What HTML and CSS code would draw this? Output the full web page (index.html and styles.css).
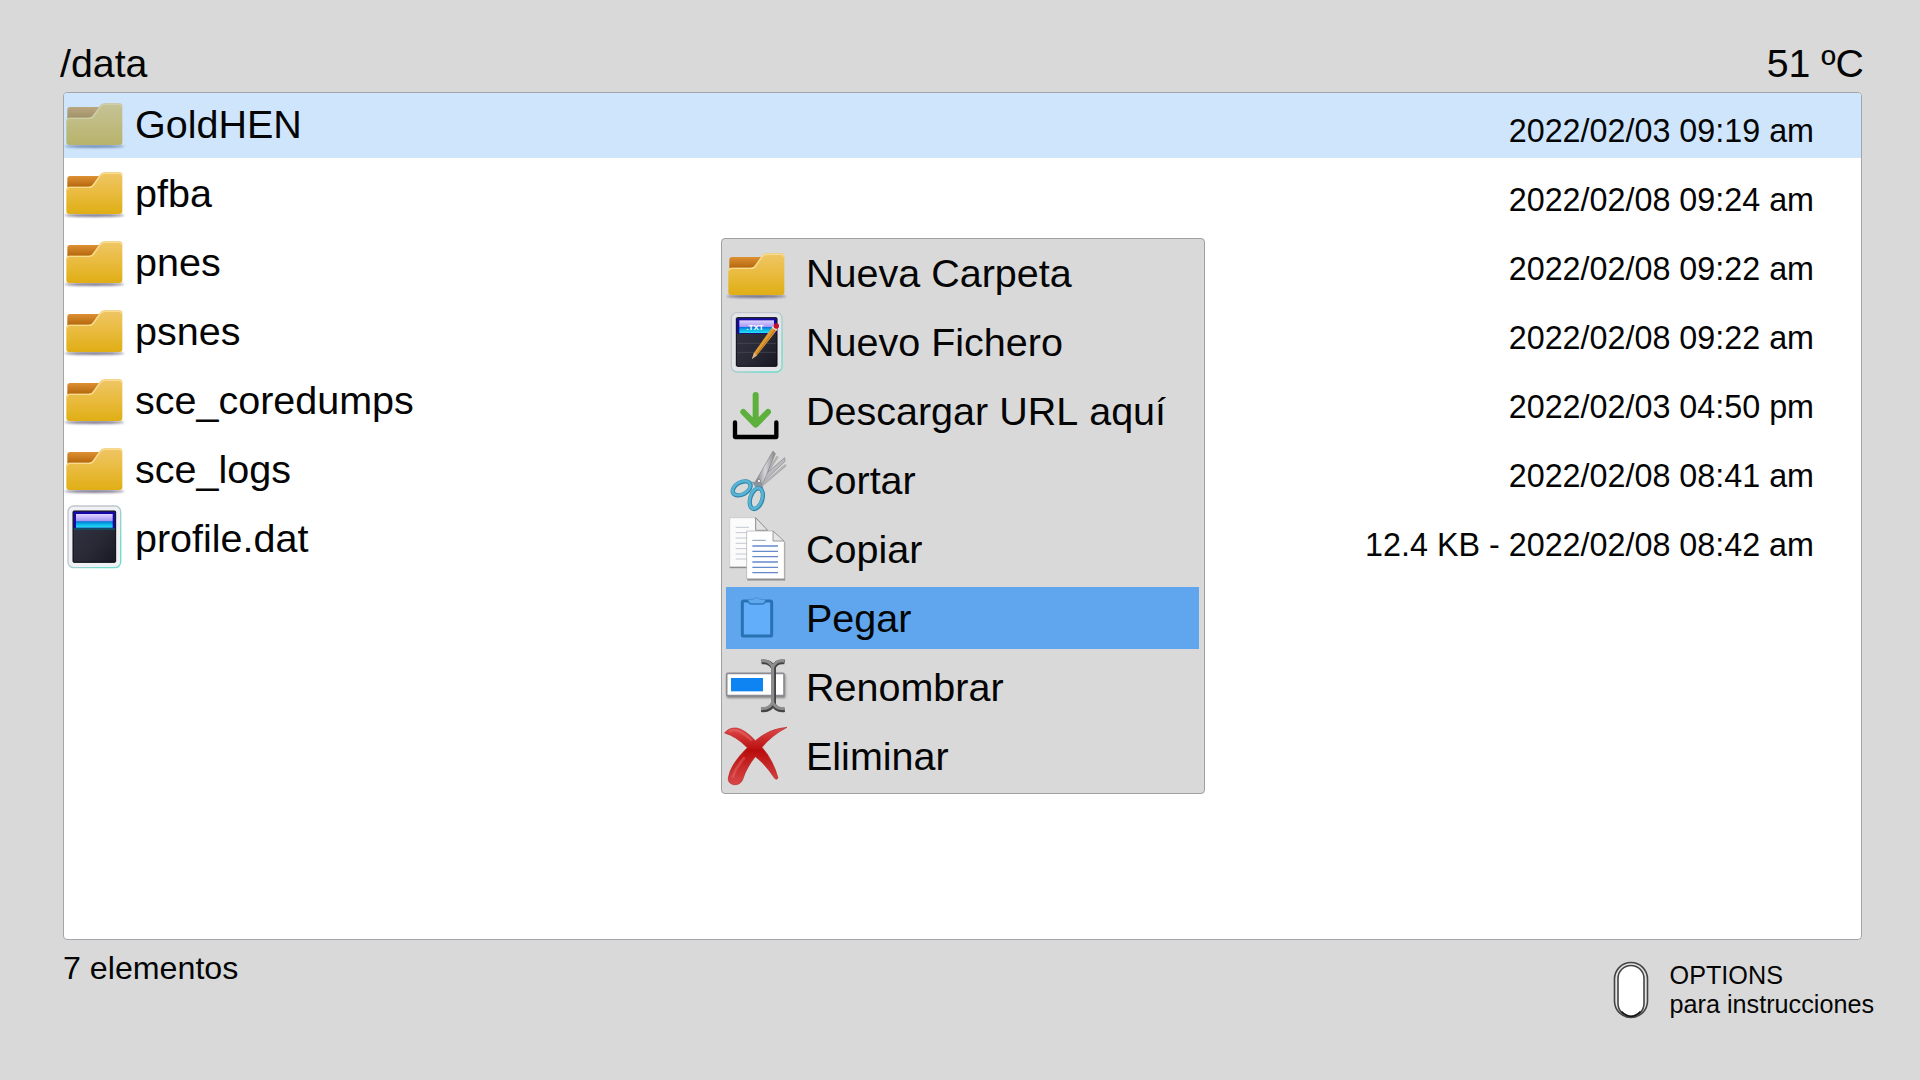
FILE: index.html
```html
<!DOCTYPE html>
<html lang="es">
<head>
<meta charset="utf-8">
<title>/data</title>
<link rel="stylesheet" href="styles.css">
</head>
<body>
<svg class="defs" aria-hidden="true">
  <defs>
    <linearGradient id="front" x1="0" y1="0" x2="0" y2="1"><stop offset="0" stop-color="#efc666"/><stop offset=".45" stop-color="#eabc42"/><stop offset="1" stop-color="#e0ae14"/></linearGradient>
    <linearGradient id="back" x1="0" y1="0" x2="0" y2="1"><stop offset="0" stop-color="#dd9133"/><stop offset=".6" stop-color="#b96a10"/></linearGradient>
    <linearGradient id="frontSel" x1="0" y1="0" x2="0" y2="1"><stop offset="0" stop-color="#c6c397"/><stop offset="1" stop-color="#b8b36b"/></linearGradient>
    <linearGradient id="backSel" x1="0" y1="0" x2="0" y2="1"><stop offset="0" stop-color="#b9a67f"/><stop offset=".6" stop-color="#a3946b"/></linearGradient>
    <linearGradient id="slate" x1="0" y1="0" x2="1" y2="1"><stop offset="0" stop-color="#333543"/><stop offset=".6" stop-color="#292936"/><stop offset="1" stop-color="#171822"/></linearGradient>
    <linearGradient id="band" x1="0" y1="0" x2="0" y2="1"><stop offset="0" stop-color="#e0d4ff"/><stop offset=".5" stop-color="#a598f5"/><stop offset=".56" stop-color="#0a78d8"/><stop offset=".75" stop-color="#08b4e8"/><stop offset="1" stop-color="#2be0f2"/></linearGradient>
    <linearGradient id="rim" x1="0" y1="0" x2="1" y2="1"><stop offset=".4" stop-color="#c3c5cc"/><stop offset=".8" stop-color="#6fdccd"/></linearGradient>
    <linearGradient id="steel" x1="0" y1="0" x2="1" y2="0"><stop offset="0" stop-color="#77777b"/><stop offset=".5" stop-color="#d5d5da"/><stop offset="1" stop-color="#85858a"/></linearGradient>
    <linearGradient id="red" x1="0" y1="0" x2="0" y2="1"><stop offset="0" stop-color="#e04b4b"/><stop offset=".4" stop-color="#b90d0d"/><stop offset="1" stop-color="#d84848"/></linearGradient>
    <filter id="soft" x="-20%" y="-60%" width="140%" height="220%"><feGaussianBlur stdDeviation="3"/></filter>
    <symbol id="folder" viewBox="42 390 192 192">
      <ellipse cx="133" cy="556" rx="90" ry="5" fill="#57506a" opacity=".75" filter="url(#soft)"/>
      <path d="M52 446q0-8 8-8h90v50H52z" fill="url(#back)"/>
      <path d="M49 478q0-7 7-8h60q9 0 14-9l17-24q7-10 16-10h46q8 0 8 8v108q0 9-9 9H58q-9 0-9-9z" fill="url(#front)"/>
      <path d="M51 479q1-7 7-7h59q10 0 15-9l17-24q6-9 15-9h44q7 0 7 7" fill="none" stroke="#f8dc92" stroke-width="4"/>
    </symbol>
    <symbol id="folderSel" viewBox="42 390 192 192">
      <ellipse cx="133" cy="556" rx="90" ry="5" fill="#4c6a9a" opacity=".7" filter="url(#soft)"/>
      <path d="M52 446q0-8 8-8h90v50H52z" fill="url(#backSel)"/>
      <path d="M49 478q0-7 7-8h60q9 0 14-9l17-24q7-10 16-10h46q8 0 8 8v108q0 9-9 9H58q-9 0-9-9z" fill="url(#frontSel)"/>
      <path d="M51 479q1-7 7-7h59q10 0 15-9l17-24q6-9 15-9h44q7 0 7 7" fill="none" stroke="#cfceaa" stroke-width="4"/>
    </symbol>
  </defs>
</svg>

<div class="screen">
  <header class="topbar">
    <h1 class="path">/data</h1>
    <span class="temp">51 ºC</span>
  </header>

  <main class="files">
    <div class="file selected"><svg class="icon"><use href="#folderSel"/></svg><span class="name">GoldHEN</span><span class="meta">2022/02/03 09:19 am</span></div>
    <div class="file"><svg class="icon"><use href="#folder"/></svg><span class="name">pfba</span><span class="meta">2022/02/08 09:24 am</span></div>
    <div class="file"><svg class="icon"><use href="#folder"/></svg><span class="name">pnes</span><span class="meta">2022/02/08 09:22 am</span></div>
    <div class="file"><svg class="icon"><use href="#folder"/></svg><span class="name">psnes</span><span class="meta">2022/02/08 09:22 am</span></div>
    <div class="file"><svg class="icon"><use href="#folder"/></svg><span class="name">sce_coredumps</span><span class="meta">2022/02/03 04:50 pm</span></div>
    <div class="file"><svg class="icon"><use href="#folder"/></svg><span class="name">sce_logs</span><span class="meta">2022/02/08 08:41 am</span></div>
    <div class="file">
      <svg class="icon" viewBox="42 435 192 192">
        <rect x="54" y="438" width="158" height="185" rx="17" fill="#f0f1f5" stroke="url(#rim)" stroke-width="4"/>
        <rect x="69" y="453" width="128" height="154" rx="3" fill="url(#slate)" stroke="#08080f" stroke-width="3"/>
        <rect x="71" y="455" width="124" height="50" fill="#1508a8"/>
        <rect x="78" y="462" width="110" height="41" fill="url(#band)"/>
        <rect x="71" y="505" width="124" height="4" fill="#0b5c6e"/>
      </svg>
      <span class="name">profile.dat</span><span class="meta">12.4 KB - 2022/02/08 08:42 am</span>
    </div>
  </main>

  <footer class="bottombar">
    <span class="count">7 elementos</span>
    <div class="hint">
      <svg class="pill" viewBox="0 0 36 58">
        <rect x="1.5" y="1.5" width="33" height="55" rx="16.5" fill="#e4e4e4" stroke="#444" stroke-width="1.6"/>
        <rect x="5" y="4.5" width="26" height="51" rx="13" fill="#fff" stroke="#444" stroke-width="1.6"/>
        <path d="M8.500 50.500q9.500 9.500 19 0" fill="none" stroke="#111" stroke-width="1.600"/>
      </svg>
      <p class="hint-text">OPTIONS<br>para instrucciones</p>
    </div>
  </footer>

  <nav class="menu">
    <div class="item"><svg class="icon"><use href="#folder"/></svg><span>Nueva Carpeta</span></div>
    <div class="item">
      <svg class="icon" viewBox="33 240 192 192">
        <rect x="49" y="248" width="152" height="178" rx="17" fill="#e3e5e9" stroke="url(#rim)" stroke-width="4"/>
        <rect x="64" y="263" width="122" height="146" rx="3" fill="url(#slate)" stroke="#08080f" stroke-width="3"/>
        <path d="M66 340h118M66 367h118" stroke="#4b4d5a" stroke-width="2"/>
        <rect x="66" y="265" width="118" height="46" fill="#1508a8"/>
        <rect x="73" y="271" width="104" height="38" fill="url(#band)"/>
        <text class="txt-label" x="94" y="299">.TXT</text>
        <path d="M172 291l14 9-60 76-15 11 6-19z" fill="#e09a32"/>
        <path d="M181 298l-57 76" stroke="#b8701c" stroke-width="3"/>
        <path d="M117 368l9 8-15 11z" fill="#d8b08a"/>
        <path d="M172 290l14 9" stroke="#e8dcd8" stroke-width="7"/>
        <circle cx="184" cy="288" r="8" fill="#c3102c"/>
      </svg>
      <span>Nuevo Fichero</span>
    </div>
    <div class="item">
      <svg class="icon" viewBox="33 12 192 192">
        <path d="M60 142v44h124v-44" fill="none" stroke="#000" stroke-width="13" stroke-linecap="round" stroke-linejoin="round"/>
        <path d="M122 60v86M85 111l37 38 37-38" fill="none" stroke="#5db03c" stroke-width="18" stroke-linecap="round" stroke-linejoin="round"/>
      </svg>
      <span>Descargar URL aquí</span>
    </div>
    <div class="item">
      <svg class="icon" viewBox="33 219 192 192">
        <path d="M130 334L188 244M138 334L213 270" stroke="#666" stroke-width="7" opacity=".35"/>
        <path d="M209 248l1 11-71 68-12-8z" fill="#b9bac0" stroke="#85858a" stroke-width="2"/>
        <path d="M174 228l7 8-36 86-17 12-8-12z" fill="url(#steel)" stroke="#85858a" stroke-width="2"/>
        <path d="M110 320l30 2 5 18-18 4z" fill="#88949d"/>
        <circle cx="132" cy="318" r="5" fill="#e9e9ec" stroke="#777" stroke-width="2"/>
        <ellipse cx="80" cy="340" rx="29" ry="18" transform="rotate(-29 80 340)" fill="none" stroke="#2f86a8" stroke-width="13"/>
        <ellipse cx="79" cy="339" rx="29" ry="18" transform="rotate(-29 79 339)" fill="none" stroke="#58b4d6" stroke-width="8"/>
        <ellipse cx="124" cy="371" rx="18" ry="32" transform="rotate(18 124 371)" fill="none" stroke="#2f86a8" stroke-width="13"/>
        <ellipse cx="123" cy="370" rx="18" ry="32" transform="rotate(18 123 370)" fill="none" stroke="#58b4d6" stroke-width="8"/>
      </svg>
      <span>Cortar</span>
    </div>
    <div class="item">
      <svg class="icon" viewBox="33 426 192 192">
        <path d="M44 577h64" stroke="#666" stroke-width="5" opacity=".7"/>
        <path d="M44 428h78l36 38v109H44z" fill="#fbfbfb" stroke="#c2c2c2" stroke-width="2"/>
        <path d="M122 428l36 38h-36z" fill="#e2e2e2" stroke="#8b8b8b" stroke-width="3"/>
        <path d="M62 457h40M62 473h40M62 489h40M62 505h40M62 521h40M62 537h40M62 552h40" stroke="#c3c8d2" stroke-width="3"/>
        <path d="M97 614h111V500" fill="none" stroke="#777" stroke-width="5" opacity=".8"/>
        <path d="M95 468h79l34 32v111H95z" fill="#fff" stroke="#aaa" stroke-width="2"/>
        <path d="M174 468v30h33z" fill="#e6e6e6" stroke="#999" stroke-width="3"/>
        <path d="M112 496h40" stroke="#8a9bb8" stroke-width="3"/>
        <path d="M112 513h77M112 529h77M112 545h77M112 561h77M112 577h77M112 593h77" stroke="#6589cc" stroke-width="4"/>
      </svg>
      <span>Copiar</span>
    </div>
    <div class="item active">
      <svg class="icon" viewBox="33 33 192 192">
        <rect x="82" y="78" width="88" height="105" rx="4" fill="#62aefb" stroke="#2872b3" stroke-width="9"/>
        <path d="M100 76q0-3 10-3h5q2-6 10-6t10 6h5q10 0 10 3v6q-2 6-9 6h-32q-8 0-9-6z" fill="#5fa8ee"/>
        <path d="M99 78q3 9 11 9h31q8 0 11-9" fill="none" stroke="#2f79ba" stroke-width="4"/>
        <path d="M104 73h12q2-5 9-5t9 5h12" fill="none" stroke="#488fd2" stroke-width="3"/>
      </svg>
      <span>Pegar</span>
    </div>
    <div class="item">
      <svg class="icon" viewBox="33 240 192 192">
        <rect x="36" y="299" width="175" height="70" fill="#444" opacity=".6" filter="url(#soft)"/>
        <rect x="35" y="295" width="172" height="67" rx="3" fill="#fff" stroke="#8b8b94" stroke-width="5"/>
        <rect x="48" y="309" width="96" height="40" fill="#0d84f2"/>
        <path d="M139 261q25-4 36 17q9-21 34-17M176 276v112M139 404q25 4 36-17q9 21 34 17" fill="none" stroke="#444" stroke-width="14"/>
        <path d="M138 258q24-4 35 18q11-22 35-18M173 274v114M138 400q24 4 35-18q11 22 35 18" fill="none" stroke="#8d8d8d" stroke-width="9"/>
      </svg>
      <span>Renombrar</span>
    </div>
    <div class="item">
      <svg class="icon" viewBox="33 447 192 192">
        <path d="M29 474q11-16 35-15 25 4 57 38 42-36 95-40-46 24-75 60 33 37 48 92-5 7-10 1-29-44-58-65-26 31-39 71-8 15-26 13-18-4-16-20 5-40 57-91-33-34-68-44z" fill="url(#red)" stroke="#b82525" stroke-width="2"/>
        <path d="M42 469q12-7 27-2 20 8 42 30M52 608q13-35 37-61" fill="none" stroke="#f08080" stroke-width="8" opacity=".35"/>
      </svg>
      <span>Eliminar</span>
    </div>
  </nav>
</div>
</body>
</html>
```
FILE: styles.css
```css
* { box-sizing: border-box; }

body {
  margin: 0;
  background: #d9d9d9;
  color: #050505;
  font-family: "Liberation Sans", Arial, sans-serif;
  font-kerning: none;
}

.defs { position: absolute; width: 0; height: 0; }

.screen {
  position: relative;
  width: 1920px;
  height: 1080px;
  padding: 32px 46px 0 63px;
  display: flex;
  flex-direction: column;
  overflow: hidden;
}

.topbar {
  height: 60px;
  margin: 0 10px 0 -3px;
  display: flex;
  justify-content: space-between;
  font-size: 39.3px;
  line-height: 62px;
}

.path { margin: 0; font: inherit; }

.files {
  width: 1799px;
  height: 848px;
  background: #fff;
  border: 1px solid #a2a5aa;
  border-radius: 4px;
  overflow: hidden;
}

.file {
  display: flex;
  height: 65px;
  margin-bottom: 4px;
  padding-right: 47px;
}

.file.selected { background: #cfe5fc; }

.icon {
  flex: none;
  width: 64px;
  height: 64px;
  margin-top: -2px;
  overflow: visible;
}

.name {
  flex: 1;
  padding-left: 7px;
  font-size: 39.5px;
  line-height: 63px;
}

.meta {
  padding-top: 15px;
  font-size: 32.3px;
  line-height: 47px;
}

.bottombar {
  display: flex;
  justify-content: space-between;
}

.count {
  padding-top: 10px;
  font-size: 32.2px;
  line-height: 37px;
}

.hint {
  display: flex;
  gap: 21px;
  padding-top: 21px;
}

.pill { width: 36px; height: 58px; }

.hint-text {
  margin: 0;
  font-size: 25.2px;
  line-height: 29px;
}

/* Context menu floating over the file list */
.menu {
  position: absolute;
  left: 721px;
  top: 238px;
  width: 484px;
  height: 556px;
  padding: 3px 5px 3px 4px;
  background: #d9d9d9;
  border: 1px solid #9da0a0;
  border-radius: 4px;
}

.item {
  display: flex;
  gap: 16px;
  height: 62px;
  margin-bottom: 7px;
  font-size: 39.5px;
  line-height: 62px;
}

.item .icon { margin-top: -1px; }

.item.active { background: #60a6ef; }

.txt-label {
  font: bold 24px "Liberation Sans", Arial, sans-serif;
  fill: #fff;
}
```
